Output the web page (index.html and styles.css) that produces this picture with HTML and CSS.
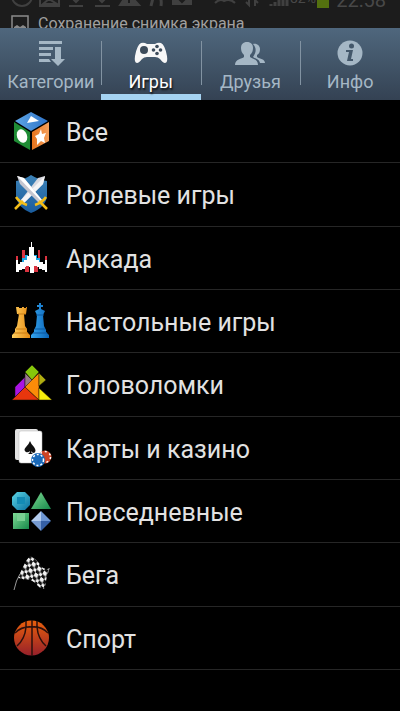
FILE: index.html
```html
<!DOCTYPE html>
<html lang="ru">
<head>
  <meta charset="UTF-8">
  <meta name="viewport" content="width=device-width, initial-scale=1">
  <title>Игры</title>
  <link rel="stylesheet" href="styles.css">
</head>
<body>
  <div class="screen">
    <header class="status">
      <div class="status-bar">
        <svg width="200" height="8" viewBox="0 0 200 8" fill="none" stroke="#404040" stroke-width="2">
          <circle cx="22" cy="-4" r="10"/>
          <path d="M40-2v8h19v-8M43 4l6-5 8 5z"/>
          <path d="M73-1l3 3 3-3M69 6h14M99-1l3 3 3-3M95 6h15"/>
          <path d="M120 5l8-12 11 12z M173-1v5h18v-5" fill="#404040"/>
          <path d="M151 6l2-8h6q3 0 2 8" stroke-width="3"/>
          <path d="M129 3v-3M179-1l3 3 3-3" stroke="#1c1c1c"/>
        </svg>
        <svg width="90" height="8" viewBox="0 0 90 8" fill="none" stroke="#404040" stroke-width="2">
          <path d="M15 3q5-5 9-2q6-3 11 2M49-1v6l-3-3M55 6V0l3 3"/>
          <path d="M71 6V4M75 6V2M79 6V0M83 6V-2M87 6V-2" stroke-width="3"/>
        </svg>
        <span class="percent">82%</span>
        <span class="battery"></span>
        <span class="clock">22:58</span>
      </div>
      <div class="notice">
        <svg width="18" height="16" viewBox="0 0 18 16" fill="none" stroke="#8a8a8a" stroke-width="1.5">
          <rect x="1" y="1" width="16" height="17"/>
          <path d="M3 15V12l3-2 3 2 3-2 3 2v3z" fill="#8a8a8a" stroke="none"/>
        </svg>
        <span>Сохранение снимка экрана</span>
      </div>
    </header>

    <nav class="tabs">
      <a class="tab" href="#categories">
        <svg width="32" height="28" viewBox="0 0 32 28" fill="#a5b7c5">
          <path d="M4 2h23v3H4zM4 8h14v3H4zM4 14h12v3H4zM4 20h10l2 3H4zM20 8h6v12h4l-7 7-7-7h4z"/>
        </svg>
        <span>Категории</span>
      </a>
      <a class="tab active" href="#games">
        <svg width="36" height="28" viewBox="0 0 36 28">
          <path d="M8 4Q11 3 14 5H22Q25 3 28 4Q32 6 34 17Q35 24 32 24Q30 24 27 20Q25 18 22 18H14Q11 18 9 20Q6 24 4 24Q1 24 2 17Q4 6 8 4Z" fill="#f7f7f7"/>
          <g fill="#3d4c5b">
            <circle cx="11" cy="11" r="4"/><circle cx="24" cy="7.5" r="1.8"/><circle cx="24" cy="14.5" r="1.8"/><circle cx="20.5" cy="11" r="1.8"/><circle cx="27.5" cy="11" r="1.8"/>
          </g>
        </svg>
        <span>Игры</span>
      </a>
      <a class="tab" href="#friends">
        <svg width="34" height="28" viewBox="0 0 34 28" fill="#a5b7c5">
          <path d="M14 3c4 0 6 2.500 6 6 0 3-1 5-3 7v2c2 2 8 2 8 8H2c0-6 7-6 9-8v-2c-2-2-3-4-3-7 0-3.500 2-6 6-6z"/>
          <path d="M20 5c4-1 7 2 7 5 0 3-1 5-3 6v2c3 2 8 2 8 6h-5c-1-4-4-4-7-6 3-4 4-9 0-13z"/>
        </svg>
        <span>Друзья</span>
      </a>
      <a class="tab" href="#info">
        <svg width="28" height="28" viewBox="0 0 28 28">
          <circle cx="14" cy="14" r="12.5" fill="#a5b7c5"/>
          <circle cx="15.500" cy="7" r="2.500" fill="#43576a"/>
          <path d="M10 11h7l-2 9h2v2h-6l2-9h-3z" fill="#43576a"/>
        </svg>
        <span>Инфо</span>
      </a>
    </nav>

    <ul class="list">
      <li><a href="#all">
        <svg width="40" height="40" viewBox="0 0 40 40">
          <defs>
            <linearGradient id="cubeTop" x2="1"><stop stop-color="#5ea6e6"/><stop offset="1" stop-color="#2f73c8"/></linearGradient>
            <linearGradient id="cubeRight" x2="1"><stop stop-color="#e8731c"/><stop offset="1" stop-color="#f4a05c"/></linearGradient>
          </defs>
          <path d="M19 1l17 9-17 10L3 10z" fill="url(#cubeTop)"/>
          <path d="M2 11l16 10v18L2 30z" fill="#1f8c35"/>
          <path d="M37 11L20 21v18l17-9z" fill="url(#cubeRight)"/>
          <path d="M19 5l8 5-12 2z" fill="#fff"/>
          <ellipse cx="10" cy="25" rx="5" ry="7" fill="#fff" transform="rotate(-20 10 25)"/>
          <path d="M29 18l1 5 4-1-2 5 1 5-4-2-4 4v-6l-2-3 4-2z" fill="#fff"/>
        </svg>
        <span>Все</span></a></li>
      <li><a href="#rpg">
        <svg width="40" height="40" viewBox="0 0 40 40">
          <defs><linearGradient id="shield" x2="0" y2="1"><stop stop-color="#3d83b8"/><stop offset="1" stop-color="#1a5c9d"/></linearGradient></defs>
          <path d="M4 7Q12 6 19 1Q27 6 35 7V22Q34 33 19 39Q5 33 4 22Z" fill="url(#shield)"/>
          <path d="M33 2l-7 2L9 26l3 3L31 10z" fill="#d8d9e0"/>
          <path d="M33 2L9 26l3 3L31 10z" fill="#f4f4f6"/>
          <path d="M5 2l7 2 18 22-3 3L8 10z" fill="#c5c6d0"/>
          <path d="M5 2l7 2 18 22-1 1z" fill="#fff"/>
          <path d="M4 23q3 5 11 8M11 27l-8 8M34 23q-3 5-11 8M27 27l8 8" fill="none" stroke="#f3bd18" stroke-width="2.500"/>
        </svg>
        <span>Ролевые игры</span></a></li>
      <li><a href="#arcade">
        <svg width="40" height="40" viewBox="0 0 40 40" shape-rendering="crispEdges">
          <path d="M10 12h3v8h-3zM26 12h2v8h-2zM4 18h2v4H4zM33 18h2v4h-2zM13 27h4v7h-4zM22 27h4v7h-4z" fill="#d93340"/>
          <path d="M10 20h3v-3h3v7h-6zM25 20h3v4h-6v-7h3z" fill="#1aa7e5"/>
          <path d="M19 4h1v5h2v9h2v4h3v2h4v2h2v-4h2v12h-2v-2h-3v-1h-3v-2h-5v6h-4v-6h-5v2h-3v1H7v2H4V22h2v4h2v-2h4v-2h3v-4h2V9h2z" fill="#fff"/>
          <path d="M14 28h3v5h-3zM22 28h3v5h-3z" fill="#d93340"/>
        </svg>
        <span>Аркада</span></a></li>
      <li><a href="#board">
        <svg width="40" height="40" viewBox="0 0 40 40">
          <defs>
            <linearGradient id="rook" x2="1"><stop stop-color="#ffd060"/><stop offset="1" stop-color="#e68a13"/></linearGradient>
            <linearGradient id="king" x2="1"><stop stop-color="#35a5ef"/><stop offset="1" stop-color="#0a63b5"/></linearGradient>
          </defs>
          <path d="M4 6h3v1h3V6h2v1h2V6h1l-1 7h-2l1 12 2 3v3l3 3v3H0v-3l3-3v-3l2-3 2-12H5z" fill="url(#rook)"/>
          <path d="M27 2h2v2h2v2h-2v2l4 2-2 4 1 11 2 4v2l3 3v3H19v-3l3-3v-2l2-4 1-11-2-4 4-2V6h-2V4h2z" fill="url(#king)"/>
          <path d="M6 13h8M4 28h11M2 32h14" stroke="#c97c14"/>
          <path d="M24 14h8M23 28h10M21 32h14" stroke="#0b579e"/>
        </svg>
        <span>Настольные игры</span></a></li>
      <li><a href="#puzzles">
        <svg width="40" height="40" viewBox="0 0 40 40" stroke="#161006" stroke-width=".5">
          <path d="M0 36l13-13 14 13z" fill="#e8360d"/>
          <path d="M3 23l10-10v10L3 33z" fill="#a913e4"/>
          <path d="M13 9l8 8-8 6z" fill="#98788b"/>
          <path d="M20 1l7 7-7 8-7-8z" fill="#86c70b"/>
          <path d="M27 9v27L13 23z" fill="#fb8c08"/>
          <path d="M27 9l7 7-7 6z" fill="#b0ad10"/>
          <path d="M27 24l13 12H27z" fill="#f7ee0c"/>
        </svg>
        <span>Головоломки</span></a></li>
      <li><a href="#cards">
        <svg width="40" height="40" viewBox="0 0 40 40">
          <rect x="3" y="1" width="23" height="31" rx="2" fill="#e2e2e2"/>
          <rect x="7" y="3" width="23" height="32" rx="2" fill="#fff" stroke="#bbb" stroke-width=".5"/>
          <path d="M18 13q1 3 4 6 3 4 0 6-2 0-3-2 0 2 2 3h-5q2-1 2-3-2 2-4 1-3-2 0-5 3-3 4-6z" fill="#111"/>
          <circle cx="33" cy="29" r="6.500" fill="#cd4426"/>
          <circle cx="33" cy="29" r="5.500" fill="none" stroke="#fff" stroke-width="1.500" stroke-dasharray="2 3"/>
          <circle cx="26" cy="32" r="7" fill="#1969b9"/>
          <circle cx="26" cy="32" r="5.500" fill="none" stroke="#fff" stroke-width="1.500" stroke-dasharray="2 2"/>
        </svg>
        <span>Карты и казино</span></a></li>
      <li><a href="#casual">
        <svg width="40" height="40" viewBox="0 0 40 40">
          <defs>
            <linearGradient id="gem" x2="1" y2="1"><stop stop-color="#5cd6e6"/><stop offset="1" stop-color="#086f9e"/></linearGradient>
            <linearGradient id="green" x2="1" y2="1"><stop stop-color="#7fdb94"/><stop offset="1" stop-color="#16884a"/></linearGradient>
          </defs>
          <path d="M5 1h8l5 5v8l-5 5H5l-5-5V6z" fill="url(#gem)"/>
          <path d="M5 6h8v7H5z" fill="#138bb5"/>
          <path d="M29 1l10 17H19z" fill="url(#green)"/>
          <path d="M1 22h16v16H1z" fill="url(#green)"/>
          <path d="M5 22h8v8H5z" fill="#79cf92"/>
          <path d="M29 20v10H19z" fill="#b4cdef"/><path d="M29 20l10 10H29z" fill="#6e97d4"/>
          <path d="M19 30h10v10z" fill="#7599d0"/><path d="M39 30H29v10z" fill="#3560a6"/>
        </svg>
        <span>Повседневные</span></a></li>
      <li><a href="#racing">
        <svg width="40" height="40" viewBox="0 0 40 40">
          <defs>
            <pattern id="checks" width="7" height="7" patternUnits="userSpaceOnUse" patternTransform="matrix(.8 .65 -.45 .9 1 0)">
              <path d="M0 0h7v7H0z" fill="#111"/><path d="M0 0h4v4H0zM4 4h3v3H4z" fill="#f2f2f2"/>
            </pattern>
          </defs>
          <path d="M18 2q7 3 11 10 4 5 9 2-4 9-5 20-4 2-8-3-5-6-12-5-3-2-7-2 2-5 5-11 2-6 7-11z" fill="url(#checks)"/>
          <path d="M8 20q-4 6-6 16" fill="none" stroke="#999" stroke-width="1"/>
        </svg>
        <span>Бега</span></a></li>
      <li><a href="#sport">
        <svg width="40" height="40" viewBox="0 0 40 40">
          <defs><linearGradient id="ball" x2="0" y2="1"><stop stop-color="#e85f0c"/><stop offset="1" stop-color="#96202a"/></linearGradient></defs>
          <circle cx="19.500" cy="20" r="17.500" fill="url(#ball)"/>
          <path d="M20 2v36M14 3v6q-1 12-9 19M25 3v6q1 12 9 19M3 15q7-7 17-6 9-1 16 6" fill="none" stroke="#2b100c" stroke-width="1.500"/>
        </svg>
        <span>Спорт</span></a></li>
    </ul>
  </div>
</body>
</html>
```

FILE: styles.css
```css
* {
  box-sizing: border-box;
}
body {
  margin: 0;
  background: #000;
  color: #e2e2e2;
  font-family: Roboto, "Noto Sans", sans-serif;
}
svg {
  flex: none;
}
.screen {
  display: flex;
  flex-direction: column;
  min-height: 100vh;
}
.status {
  height: 28px;
  overflow: hidden;
  background: #1c1c1c;
}
.status-bar {
  display: flex;
  height: 8px;
  align-items: flex-end;
  color: #484848;
}
.percent {
  font-size: 14px;
  line-height: 16px;
  padding-bottom: 2px;
}
.battery {
  width: 12px;
  height: 8px;
  margin-left: 1px;
  background: #53700f;
}
.clock {
  margin-left: auto;
  margin-right: 14px;
  font-size: 20px;
  line-height: 16px;
}
.notice {
  display: flex;
  gap: 9px;
  padding: 7px 11px;
  font-size: 16px;
  line-height: 18px;
  color: #a0a0a0;
}
.notice span {
  white-space: nowrap;
}
.tabs {
  display: flex;
  height: 72px;
  padding-left: 1px;
  background: linear-gradient(#4f677d, #344253);
}
.tab {
  position: relative;
  flex: 1;
  display: flex;
  flex-direction: column;
  align-items: center;
  padding-top: 11px;
  color: #a5b7c5;
  font-size: 18px;
  line-height: 30px;
  text-decoration: none;
  border-bottom: 6px solid transparent;
}
.tab + .tab::before {
  content: "";
  position: absolute;
  left: 0;
  top: 13px;
  width: 1px;
  height: 44px;
  background: #8293a2;
}
.tab.active {
  color: #fff;
  border-bottom-color: #a5d3f2;
  text-shadow: 1px 2px 2px #111;
}
.list {
  flex: 1;
  display: flex;
  flex-direction: column;
  margin: 0;
  padding: 0 0 41px;
  list-style: none;
}
.list li {
  flex: 1;
  display: flex;
  border-bottom: 1px solid #262626;
}
.list a {
  flex: 1;
  display: flex;
  align-items: center;
  gap: 14px;
  padding: 0 12px;
  color: #e2e2e2;
  font-size: 25px;
  line-height: 32px;
  text-decoration: none;
}
.list span {
  padding-top: 4px;
}
```
